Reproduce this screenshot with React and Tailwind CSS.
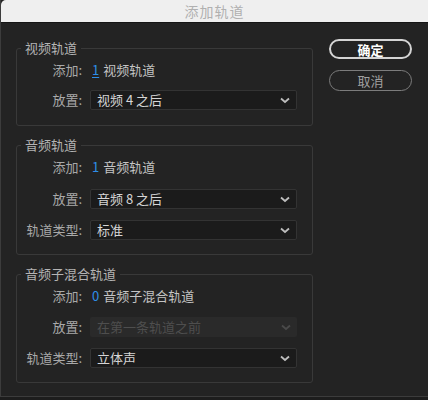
import React from "react";

const font = { fontFamily: '"Noto Sans CJK SC", "Noto Sans", sans-serif' };

const Chevron = ({ disabled }) => (
    <svg width="10" height="7" viewBox="0 0 10 7" className="mr-[6px]">
        <polyline points="1,1.5 5,5 9,1.5" fill="none" stroke={disabled ? "#4a4a4a" : "#bdbdbd"} strokeWidth="1.8" />
    </svg>
);

const Select = ({ value, disabled }) =>
    disabled ? (
        <div className="w-[207px] h-[20px] flex items-center justify-between rounded-[2px] bg-[#2a2a2a] pl-[7px] text-[#4e4e4e]">
            <span>{value}</span>
            <Chevron disabled />
        </div>
    ) : (
        <div className="w-[207px] h-[20px] flex items-center justify-between rounded-[2px] bg-[#1b1b1b] border border-[#333] pl-[6px] text-[#d6d6d6]">
            <span>{value}</span>
            <Chevron />
        </div>
    );

const Row = ({ label, children, className = "" }) => (
    <div className={"flex items-center h-[20px] " + className}>
        <div className="w-[66px] text-right text-[#a9a9a9] pr-[1px]">{label}</div>
        <div className="ml-[7px] flex items-center">{children}</div>
    </div>
);

const AddRow = ({ count, text, underline }) => (
    <Row label="添加:">
        <span className={"text-[#2e8ee8] ml-[2px] " + (underline ? "underline underline-offset-2" : "")}>{count}</span>
        <span className="ml-[4px] text-[#c4c4c4]">{text}</span>
    </Row>
);

const Group = ({ title, children, pb }) => (
    <fieldset className={"w-[297px] border border-[#393939] rounded-[3px] " + pb}>
        <legend className="ml-[4px] px-[4px] text-[#b4b4b4] leading-[18px]">{title}</legend>
        <div className="pt-[3px]">{children}</div>
    </fieldset>
);

export default function App() {
    return (
        <div className="w-[428px] h-[400px] bg-[#1d1d1d] text-[13px]" style={font}>
            <div className="h-[397px] bg-[#232323] border-l border-b border-[#3c3c3c] flex flex-col">
                <div className="h-[23px] bg-[#efefef] border-b border-[#151515] rounded-tl-[5px] flex items-center justify-center text-[14px] text-[#b0b0b0] tracking-[1px]">
                    添加轨道
                </div>
                <div className="flex pt-[16px] pl-[15px]">
                    <div className="flex flex-col gap-[10px]">
                        <Group title="视频轨道" pb="pb-[15px]">
                            <AddRow count="1" text="视频轨道" underline />
                            <Row label="放置:" className="mt-[10px]">
                                <Select value="视频 4 之后" />
                            </Row>
                        </Group>
                        <Group title="音频轨道" pb="pb-[14px]">
                            <AddRow count="1" text="音频轨道" />
                            <Row label="放置:" className="mt-[12px]">
                                <Select value="音频 8 之后" />
                            </Row>
                            <Row label="轨道类型:" className="mt-[11px]">
                                <Select value="标准" />
                            </Row>
                        </Group>
                        <Group title="音频子混合轨道" pb="pb-[14px]">
                            <AddRow count="0" text="音频子混合轨道" />
                            <Row label="放置:" className="mt-[11px]">
                                <Select value="在第一条轨道之前" disabled />
                            </Row>
                            <Row label="轨道类型:" className="mt-[11px]">
                                <Select value="立体声" />
                            </Row>
                        </Group>
                    </div>
                    <div className="ml-[16px] flex flex-col gap-[11px]">
                        <button className="w-[83px] h-[20px] rounded-full border-2 border-[#d4d4d4] text-white font-bold flex items-center justify-center leading-none">
                            确定
                        </button>
                        <button className="w-[83px] h-[21px] rounded-full border-[1.5px] border-[#7c7c7c] text-[#a0a0a0] flex items-center justify-center leading-none">
                            取消
                        </button>
                    </div>
                </div>
            </div>
        </div>
    );
}
